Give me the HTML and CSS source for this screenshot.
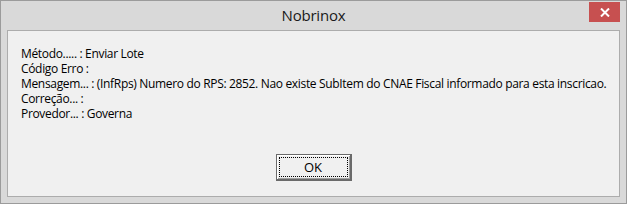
FILE: index.html
```html
<!DOCTYPE html>
<html>
<head>
<meta charset="utf-8">
<link rel="stylesheet" href="styles.css">
</head>
<body>
<div class="window">
  <div class="titlebar">
    <span class="title">Nobrinox</span>
    <div class="close">
      <svg width="10" height="9" viewBox="0 0 10 9"><path d="M1 0.5 L9 8.5 M9 0.5 L1 8.5" stroke="#fff" stroke-width="2" fill="none"/></svg>
    </div>
  </div>
  <div class="client">
    <div class="lines">
      <div class="line">Método..... : Enviar Lote</div>
      <div class="line">Código Erro :</div>
      <div class="line">Mensagem... : (InfRps) Numero do RPS: 2852. Nao existe SubItem do CNAE Fiscal informado para esta inscricao.</div>
      <div class="line">Correção... :</div>
      <div class="line">Provedor... : Governa</div>
    </div>
    <div class="actions">
      <button class="btn"><span class="focus">OK</span></button>
    </div>
  </div>
</div>
</body>
</html>
```
FILE: styles.css
```css
html, body { margin: 0; padding: 0; background: #d9d9d9; }
.window {
  width: 627px; height: 204px; box-sizing: border-box;
  border: 1px solid #9b9b9b; background: #d9d9d9;
  display: flex; flex-direction: column;
  position: relative;
  font-family: "Open Sans", "Noto Sans", sans-serif;
}
.titlebar {
  height: 29px; display: flex; align-items: center; justify-content: center;
}
.title { font-size: 15px; color: #1a1a1a; margin-top: -1px; letter-spacing: -0.2px; }
.close {
  position: absolute; top: 1px; right: 6px;
  width: 31px; height: 20px; background: #c75050;
  display: flex; align-items: center; justify-content: center;
}
.client {
  margin: 0 6px 6px 6px; flex: 1;
  border: 1px solid #acacac; background: #f0f0f0;
  display: flex; flex-direction: column;
}
.lines {
  padding: 15px 0 0 13px; font-size: 12px; color: #000;
  letter-spacing: -0.33px; white-space: nowrap;
  display: flex; flex-direction: column;
}
.line { height: 15px; line-height: 15px; }
.actions { display: flex; justify-content: center; margin-top: 33px; }
.btn {
  width: 76px; height: 27px; padding: 0; margin: 0;
  background: #f0f0f0; font: inherit; font-size: 13px; color: #000;
  border: 1px solid #6a6a6a; border-right-width: 2px; border-bottom-width: 2px;
  box-shadow: inset 1px 1px 0 #fff, inset -1px -1px 0 #a0a0a0;
  display: flex; padding: 2px;
  box-sizing: border-box;
}
.focus {
  flex: 1; border: 1px dotted #000;
  display: flex; align-items: center; justify-content: center;
}
```
